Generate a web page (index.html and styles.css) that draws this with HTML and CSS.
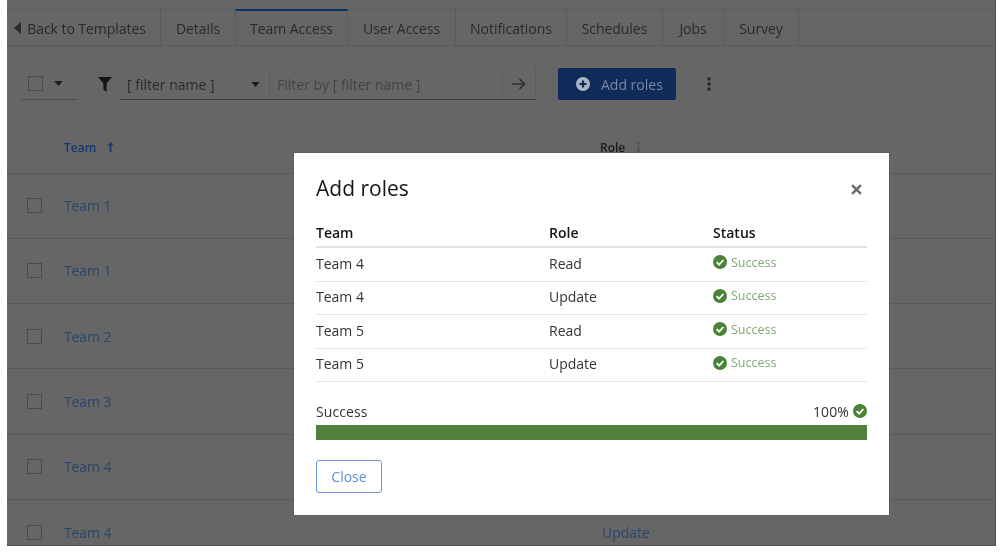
FILE: index.html
```html
<!DOCTYPE html>
<html lang="en">
<head>
<meta charset="utf-8">
<title>Team Access</title>
<link rel="stylesheet" href="styles.css">
</head>
<body>
<div class="app">
  <nav class="tabs">
    <a class="tab tab-back"><svg class="back-icon" viewBox="0 0 7 12"><path d="M7 0v12L0 6z"/></svg>Back to Templates</a>
    <a class="tab tab-details">Details</a>
    <a class="tab tab-team active">Team Access</a>
    <a class="tab tab-user">User Access</a>
    <a class="tab tab-notif">Notifications</a>
    <a class="tab tab-sched">Schedules</a>
    <a class="tab tab-jobs">Jobs</a>
    <a class="tab tab-survey">Survey</a>
  </nav>
  <div class="toolbar">
    <div class="select-all"><span class="checkbox"></span><svg class="caret" viewBox="0 0 10 6"><path d="M0 0h10L5 6z"/></svg></div>
    <svg class="filter-icon" viewBox="0 0 14 15"><path d="M0 0h14L8.6 6.6V15L5.4 12.4V6.6z"/></svg>
    <div class="filter-group">
      <div class="filter-name">[ filter name ]<svg class="caret" viewBox="0 0 10 6"><path d="M0 0h10L5 6z"/></svg></div>
      <div class="filter-input">Filter by [ filter name ]</div>
      <div class="filter-go"><svg viewBox="0 0 14 12"><path d="M0 6h12M7.500 1l5 5-5 5" fill="none" stroke="currentColor" stroke-width="1.7"/></svg></div>
    </div>
    <button class="add-btn"><svg viewBox="0 0 14 14"><circle cx="7" cy="7" r="7" fill="#a9b4c4"/><path d="M7 3.500v7M3.500 7h7" stroke="#0e2b59" stroke-width="2.2"/></svg>Add roles</button>
    <svg class="kebab" viewBox="0 0 4 14"><circle cx="2" cy="2" r="1.7"/><circle cx="2" cy="7" r="1.7"/><circle cx="2" cy="12" r="1.7"/></svg>
  </div>
  <div class="table-head">
    <span class="th-team">Team<svg class="sort-up" viewBox="0 0 7 10"><path d="M3.500 0L6.600 3.600H4.400V10H2.600V3.600H.4z"/></svg></span>
    <span class="th-role">Role<svg class="sort-none" viewBox="0 0 7 12"><path d="M3.500 0L6 3H4.200v6H6l-2.500 3L1 9h1.800V3H1z"/></svg></span>
  </div>
  <div class="row"><span class="checkbox"></span><a class="team-link">Team 1</a></div>
  <div class="row"><span class="checkbox"></span><a class="team-link">Team 1</a></div>
  <div class="row"><span class="checkbox"></span><a class="team-link">Team 2</a></div>
  <div class="row"><span class="checkbox"></span><a class="team-link">Team 3</a></div>
  <div class="row"><span class="checkbox"></span><a class="team-link">Team 4</a></div>
  <div class="row"><span class="checkbox"></span><a class="team-link">Team 4</a><a class="role-link">Update</a></div>
</div>

<section class="modal">
  <header class="modal-head">
    <h1>Add roles</h1>
    <svg class="close-x" viewBox="0 0 10 10"><path d="M1 1l8 8M9 1l-8 8" stroke="#6a6e73" stroke-width="2.300" fill="none"/></svg>
  </header>
  <div class="m-row m-header"><span>Team</span><span>Role</span><span>Status</span></div>
  <div class="m-row"><span>Team 4</span><span>Read</span><span class="status"><svg class="ok" viewBox="0 0 14 14"><circle cx="7" cy="7" r="7"/><path d="M3.600 7.200l2.500 2.400 4.300-4.600"/></svg>Success</span></div>
  <div class="m-row"><span>Team 4</span><span>Update</span><span class="status"><svg class="ok" viewBox="0 0 14 14"><circle cx="7" cy="7" r="7"/><path d="M3.600 7.200l2.500 2.400 4.300-4.600"/></svg>Success</span></div>
  <div class="m-row"><span>Team 5</span><span>Read</span><span class="status"><svg class="ok" viewBox="0 0 14 14"><circle cx="7" cy="7" r="7"/><path d="M3.600 7.200l2.500 2.400 4.300-4.600"/></svg>Success</span></div>
  <div class="m-row"><span>Team 5</span><span>Update</span><span class="status"><svg class="ok" viewBox="0 0 14 14"><circle cx="7" cy="7" r="7"/><path d="M3.600 7.200l2.500 2.400 4.300-4.600"/></svg>Success</span></div>
  <div class="progress-label"><span>Success</span><span class="progress-value">100%<svg class="ok" viewBox="0 0 14 14"><circle cx="7" cy="7" r="7"/><path d="M3.600 7.200l2.500 2.400 4.300-4.600"/></svg></span></div>
  <div class="progress-bar"></div>
  <button class="close-btn">Close</button>
</section>
</body>
</html>
```
FILE: styles.css
```css
* { box-sizing: border-box; }
html, body { margin: 0; height: 100%; background: #fff; overflow: hidden; }
body { font-family: "Open Sans", "Noto Sans", sans-serif; font-size: 14px; color: #151515; }

.app { margin-left: 7px; width: 989px; height: 546px; padding-top: 9px; background: #666; border-right: 1px solid #4c4c4c; border-bottom: 1px solid #4c4c4c; overflow: hidden; filter: blur(.35px); }

.tabs { display: flex; height: 37px; border-top: 1px solid #5c5c5c; border-bottom: 1px solid #5b5b5b; color: #2a2a2a; letter-spacing: -.05px; }
.tab { display: flex; align-items: center; justify-content: center; height: 35px; padding-top: 1px; border-right: 1px solid #5b5b5b; white-space: nowrap; }
.tab-back { width: 154px; padding-right: 7px; }
.tab-details { width: 75px; }
.tab-team { width: 113px; }
.tab-user { width: 108px; }
.tab-notif { width: 111px; }
.tab-sched { width: 96px; }
.tab-jobs { width: 61px; }
.tab-survey { width: 75px; }
.tab.active { position: relative; height: 36px; margin: -1px 0 -1px -1px; border-top: 2px solid #0c3169; border-left: 1px solid #5b5b5b; background: #666; }
.back-icon { width: 7px; height: 12px; margin-right: 6px; fill: #2a2a2a; }

.toolbar { display: flex; align-items: center; height: 32px; margin: 22px 0 0 14px; }
.select-all { display: flex; align-items: center; width: 55px; height: 32px; padding-left: 7px; border-bottom: 1px solid #4d4d4d; }
.checkbox { display: block; width: 15px; height: 15px; border: 1px solid #4a4a4a; flex: none; }
.caret { width: 9px; height: 5px; fill: #1c1c1c; }
.select-all .caret { margin-left: 11px; }
.filter-icon { width: 14px; height: 15px; margin-left: 22px; fill: #151515; }
.filter-group { display: flex; height: 32px; margin-left: 8px; border-bottom: 1px solid #3f3f3f; }
.filter-name { display: flex; align-items: center; justify-content: space-between; width: 150px; padding: 1px 9px 0 7px; border-right: 1px solid #5c5c5c; color: #2a2a2a; white-space: nowrap; }
.filter-input { display: flex; align-items: center; width: 233px; padding: 1px 0 0 7px; border-right: 1px solid #5c5c5c; color: #444; white-space: nowrap; }
.filter-go { display: flex; align-items: center; justify-content: center; width: 33px; border-right: 1px solid #5c5c5c; color: #303030; }
.filter-go svg { width: 14px; height: 12px; }
.add-btn { display: flex; align-items: center; width: 118px; height: 32px; margin-left: 22px; padding: 0 0 0 18px; border: 0; border-radius: 2px; background: #0e2b59; color: #7b899f; font: inherit; white-space: nowrap; }
.add-btn svg { width: 14px; height: 14px; margin-right: 11px; }
.kebab { width: 4px; height: 14px; margin-left: 31px; fill: #222; }

.table-head { display: flex; align-items: center; height: 73.500px; padding: 22px 0 0 57px; border-bottom: 1px solid #5a5a5a; font-size: 12px; font-weight: 600; }
.th-team { display: flex; align-items: center; width: 536px; color: #133a73; }
.th-role { display: flex; align-items: center; color: #1a1a1a; }
.sort-up { width: 7px; height: 10px; margin-left: 11px; fill: #133a73; }
.sort-none { width: 7px; height: 12px; margin-left: 10px; fill: #555; }

.row { display: flex; align-items: center; height: 65.300px; padding-left: 20px; border-bottom: 1px solid #5a5a5a; }
.row .checkbox { margin-right: 22px; }
.team-link { width: 538px; color: #28466e; letter-spacing: -.1px; }
.role-link { color: #28466e; }

.modal { position: absolute; left: 294px; top: 153px; width: 595px; height: 362px; padding: 0 22px; background: #fff; color: #151515; box-shadow: 0 0 1px rgba(0,0,0,.5); filter: blur(.3px); }
.modal-head { display: flex; align-items: center; justify-content: space-between; height: 70px; padding-right: 5px; }
.modal-head h1 { margin: 0; font-size: 21px; font-weight: 400; }
.close-x { width: 11px; height: 11px; margin-top: 2px; }
.m-row { display: grid; grid-template-columns: 233px 164px 1fr; align-items: center; height: 33.500px; padding-bottom: 2px; border-bottom: 1px solid #e3e3e3; color: #333; }
.m-header { height: 25px; padding-bottom: 4px; border-bottom: 2px solid #e3e3e3; color: #151515; font-weight: 600; }
.status { display: flex; align-items: center; margin-bottom: 2px; font-size: 12.500px; color: #7fa872; }
.ok { width: 14px; height: 14px; margin-right: 4px; flex: none; }
.ok circle { fill: #4a8237; }
.ok path { fill: none; stroke: #fff; stroke-width: 1.800; }
.progress-label { display: flex; justify-content: space-between; align-items: center; margin-top: 20px; height: 18px; color: #333; letter-spacing: .1px; }
.progress-value { display: flex; align-items: center; }
.progress-value .ok { margin: 0 0 0 4px; }
.progress-bar { height: 15px; margin-top: 5px; background: #50803c; }
.close-btn { display: block; width: 66px; height: 33px; margin-top: 20px; padding: 0; border: 1px solid #6b97e0; border-radius: 3px; background: #fff; color: #5b8fdc; font: inherit; }
```
